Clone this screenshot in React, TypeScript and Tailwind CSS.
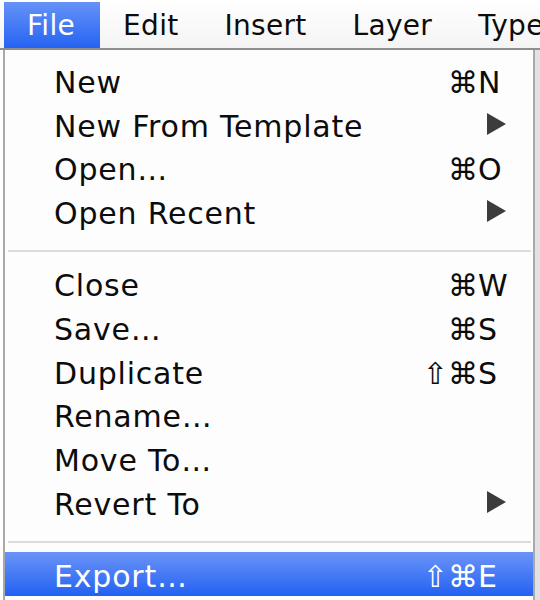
import React from "react";

type Item = {
  label: string;
  mods?: string;
  keyName?: string;
  submenu?: boolean;
  active?: boolean;
};

const groups: Item[][] = [
  [
    { label: "New", mods: "⌘", keyName: "N" },
    { label: "New From Template", submenu: true },
    { label: "Open…", mods: "⌘", keyName: "O" },
    { label: "Open Recent", submenu: true },
  ],
  [
    { label: "Close", mods: "⌘", keyName: "W" },
    { label: "Save…", mods: "⌘", keyName: "S" },
    { label: "Duplicate", mods: "⇧⌘", keyName: "S" },
    { label: "Rename…" },
    { label: "Move To…" },
    { label: "Revert To", submenu: true },
  ],
  [{ label: "Export…", mods: "⇧⌘", keyName: "E", active: true }],
];

const menus = ["File", "Edit", "Insert", "Layer", "Type"];

const Arrow: React.FC = () => (
  <svg width="19" height="22" viewBox="0 0 19 22" className="block">
    <polygon points="0,0 19,11 0,22" fill="#3c3c3c" />
  </svg>
);

const MenuRow: React.FC<{ item: Item }> = ({ item }) => (
  <div
    className={
      item.active
        ? "flex h-[43.7px] items-center pt-[6px] pl-[49px] bg-gradient-to-b from-[#6a93f7] to-[#2160f1] text-white"
        : "flex h-[43.7px] items-center pt-[6px] pl-[49px] text-[#0c0c0c]"
    }
  >
    <span className="flex-1 whitespace-nowrap tracking-[0.8px]">{item.label}</span>
    <div className="flex w-[92px] mr-[21px] items-center">
      {item.submenu ? (
        <div className="flex w-full justify-end pr-[6px] -mt-[6px]">
          <Arrow />
        </div>
      ) : item.keyName ? (
        <>
          <span className="w-[58px] text-right">{item.mods}</span>
          <span className="w-[34px] text-left">{item.keyName}</span>
        </>
      ) : null}
    </div>
  </div>
);

const Separator: React.FC = () => (
  <div className="h-[28.8px] pt-[17px] pl-[3px] pr-[2px]">
    <div className="h-[2px] bg-[#dcdcdc]" />
  </div>
);

export default function App() {
  return (
    <div
      className="w-[540px] h-[600px] overflow-hidden bg-white text-[30px] leading-none"
      style={{ fontFamily: '"DejaVu Sans", "Liberation Sans", sans-serif' }}
    >
      <div className="flex h-[50px] border-b-2 border-[#8e8e8e] bg-gradient-to-b from-white to-[#f4f4f4] pl-[4px] whitespace-nowrap text-[28px] tracking-[0.3px]">
        {menus.map((m, i) => (
          <div
            key={m}
            className={
              i === 0
                ? "flex items-center pl-[23px] pr-[25px] pt-[2px] mt-[2px] bg-gradient-to-b from-[#6592f7] to-[#2462f2] text-white"
                : "flex items-center px-[23px] pt-[4px] text-[#0c0c0c]"
            }
          >
            {m}
          </div>
        ))}
      </div>
      <div className="flex h-[550px]">
        <div className="w-[3px] bg-white" />
        <div className="w-[532px] border-l-2 border-r-2 border-[#a9a9a9] bg-[#fdfdfd] pt-[8px]">
          {groups.map((g, gi) => (
            <React.Fragment key={gi}>
              {gi > 0 && <Separator />}
              {g.map((item) => (
                <MenuRow key={item.label} item={item} />
              ))}
            </React.Fragment>
          ))}
        </div>
        <div className="flex-1 bg-[#e2e2e2]" />
      </div>
    </div>
  );
}
